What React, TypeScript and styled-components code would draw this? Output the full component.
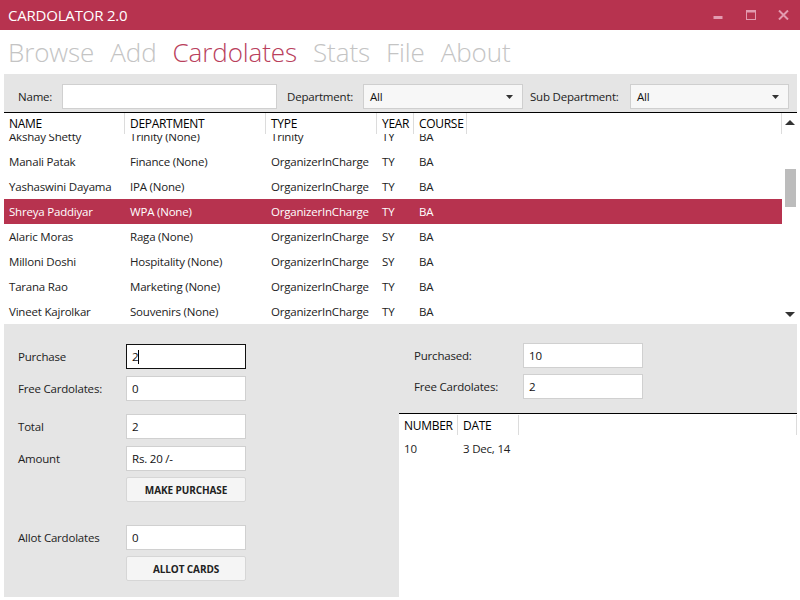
import React from "react";
import styled, { createGlobalStyle } from "styled-components";

const CRIMSON = "#b7334f";
const PANEL = "#e5e5e5";
const FONT = `"Segoe UI", "Open Sans", "Noto Sans", sans-serif`;

const GlobalStyle = createGlobalStyle`
  html, body { margin: 0; padding: 0; background: #fff; }
  body { font-family: ${FONT}; color: #222; }
  * { box-sizing: border-box; }
`;

const Window = styled.div`
  width: 800px;
  height: 600px;
  background: #fff;
  display: flex;
  flex-direction: column;
  overflow: hidden;
  font-size: 11.5px;
  letter-spacing: -0.2px;
`;

const TitleBar = styled.div`
  height: 30px;
  flex: none;
  background: ${CRIMSON};
  display: flex;
  align-items: center;
  padding-left: 8px;
`;

const Title = styled.div`
  color: #fff;
  font-size: 15px;
  letter-spacing: -0.2px;
  flex: 1;
`;

const Controls = styled.div`
  display: flex;
  align-items: center;
  height: 30px;
`;

const CtrlBtn = styled.div`
  width: 33px;
  height: 30px;
  display: flex;
  align-items: center;
  justify-content: center;
`;

const Nav = styled.nav`
  height: 44px;
  flex: none;
  display: flex;
  align-items: center;
  gap: 16px;
  padding-left: 8px;
`;

const NavItem = styled.div<{ $active?: boolean }>`
  font-size: 26px;
  font-weight: 300;
  letter-spacing: -0.1px;
  color: ${(p) => (p.$active ? "#b9405c" : "#c4c4c4")};
  line-height: 30px;
`;

const Content = styled.div`
  flex: 1;
  display: flex;
  flex-direction: column;
  padding: 0 3px 0 4px;
`;

const FilterBar = styled.div`
  height: 38px;
  flex: none;
  background: ${PANEL};
  display: flex;
  align-items: flex-start;
  padding: 10px 0 0 14px;
  color: #222;
`;

const FilterLabel = styled.span<{ $w: number; $ml?: number }>`
  width: ${(p) => p.$w}px;
  margin-left: ${(p) => p.$ml ?? 0}px;
  white-space: nowrap;
  line-height: 25px;
  flex: none;
`;

const TextBox = styled.div<{ $w: number }>`
  width: ${(p) => p.$w}px;
  height: 25px;
  flex: none;
  background: #fff;
  border: 1px solid #d0d0d0;
`;

const Select = styled.div<{ $w: number }>`
  width: ${(p) => p.$w}px;
  height: 25px;
  flex: none;
  background: #f7f7f7;
  border: 1px solid #cfcfcf;
  display: flex;
  align-items: center;
  justify-content: space-between;
  padding: 0 9px 0 6px;
  color: #111;
`;

const Grid = styled.div`
  height: 212px;
  flex: none;
  border-top: 1px solid #000;
  display: flex;
  background: #fff;
`;

const TableArea = styled.div`
  flex: 1;
  display: flex;
  flex-direction: column;
  min-width: 0;
`;

const HeaderRow = styled.div`
  height: 21px;
  flex: none;
  display: flex;
  position: relative;
  z-index: 1;
  background: #fff;
`;

const HeaderCell = styled.div<{ $w?: number }>`
  width: ${(p) => (p.$w ? `${p.$w}px` : "auto")};
  flex: ${(p) => (p.$w ? "none" : "1")};
  border-right: 1px solid #dcdcdc;
  font-size: 12px;
  letter-spacing: -0.3px;
  font-weight: 500;
  color: #000;
  padding-left: 5px;
  line-height: 21px;
  white-space: nowrap;
  overflow: hidden;
`;

const Body = styled.div`
  flex: 1;
  overflow: hidden;
`;

const Rows = styled.div`
  margin-top: -10px;
`;

const Row = styled.div<{ $sel?: boolean }>`
  height: 25px;
  display: flex;
  align-items: center;
  background: ${(p) => (p.$sel ? CRIMSON : "transparent")};
  color: ${(p) => (p.$sel ? "#fff" : "#222")};
`;

const Cell = styled.div<{ $w: number }>`
  width: ${(p) => p.$w}px;
  flex: none;
  padding-left: 5px;
  white-space: nowrap;
  overflow: hidden;
`;

const ScrollBar = styled.div`
  width: 15px;
  flex: none;
  display: flex;
  flex-direction: column;
  align-items: center;
  background: #fff;
`;

const ArrowUp = styled.div`
  margin-top: 7px;
  width: 0;
  height: 0;
  border-left: 5px solid transparent;
  border-right: 5px solid transparent;
  border-bottom: 5px solid #333;
`;

const Thumb = styled.div`
  margin-top: 44px;
  width: 11px;
  height: 38px;
  background: #bcbcbc;
  align-self: flex-end;
  margin-right: 1px;
`;

const Spacer = styled.div`
  flex: 1;
`;

const ArrowDown = styled.div`
  margin-bottom: 7px;
  width: 0;
  height: 0;
  border-left: 5px solid transparent;
  border-right: 5px solid transparent;
  border-top: 5px solid #333;
`;

const Bottom = styled.div`
  flex: 1;
  display: flex;
`;

const LeftForm = styled.div`
  width: 395px;
  height: 273px;
  background: ${PANEL};
  padding: 20px 0 0 14px;
  display: flex;
  flex-direction: column;
`;

const FormRow = styled.div<{ $mt?: number; $labelW?: number }>`
  display: grid;
  grid-template-columns: ${(p) => p.$labelW ?? 108}px 120px;
  align-items: center;
  margin-top: ${(p) => p.$mt ?? 0}px;
  color: #222;
  white-space: nowrap;
`;

const Field = styled.div<{ $focus?: boolean }>`
  height: 25px;
  background: #fff;
  border: 1px solid ${(p) => (p.$focus ? "#111" : "#d0d0d0")};
  display: flex;
  align-items: center;
  padding-left: 5px;
  color: #111;
`;

const Caret = styled.span`
  display: inline-block;
  width: 1px;
  height: 14px;
  background: #000;
`;

const Button = styled.div`
  height: 25px;
  background: #f5f5f5;
  border: 1px solid #d6d6d6;
  border-radius: 2px;
  display: flex;
  align-items: center;
  justify-content: center;
  font-size: 10px;
  font-weight: 700;
  color: #222;
  letter-spacing: -0.1px;
`;

const RightPanel = styled.div`
  flex: 1;
  display: flex;
  flex-direction: column;
`;

const RightForm = styled.div`
  height: 89px;
  flex: none;
  background: ${PANEL};
  padding: 19px 0 0 15px;
  display: flex;
  flex-direction: column;
`;

const List = styled.div`
  flex: 1;
  background: #fff;
  border-top: 1px solid #000;
`;

const ListHeader = styled.div`
  height: 21px;
  display: flex;
  padding-top: 1px;
`;

const ListRow = styled.div`
  height: 25px;
  display: flex;
  align-items: center;
  color: #222;
  margin-top: 1px;
`;

const people = [
  ["Akshay Shetty", "Trinity (None)", "Trinity", "TY", "BA"],
  ["Manali Patak", "Finance (None)", "OrganizerInCharge", "TY", "BA"],
  ["Yashaswini Dayama", "IPA (None)", "OrganizerInCharge", "TY", "BA"],
  ["Shreya Paddiyar", "WPA (None)", "OrganizerInCharge", "TY", "BA"],
  ["Alaric Moras", "Raga (None)", "OrganizerInCharge", "SY", "BA"],
  ["Milloni Doshi", "Hospitality (None)", "OrganizerInCharge", "SY", "BA"],
  ["Tarana Rao", "Marketing (None)", "OrganizerInCharge", "TY", "BA"],
  ["Vineet Kajrolkar", "Souvenirs (None)", "OrganizerInCharge", "TY", "BA"],
];

const cols = [121, 141, 111, 37, 53];

const SelectArrow = () => (
  <svg width="7" height="4" viewBox="0 0 7 4">
    <path d="M0 0 H7 L3.5 4 Z" fill="#333" />
  </svg>
);

export default function App() {
  return (
    <>
      <GlobalStyle />
      <Window>
        <TitleBar>
          <Title>CARDOLATOR 2.0</Title>
          <Controls>
            <CtrlBtn>
              <svg width="10" height="10" viewBox="0 0 10 10">
                <rect x="0.5" y="6" width="9" height="3" fill="#e39bb0" />
              </svg>
            </CtrlBtn>
            <CtrlBtn>
              <svg width="10" height="10" viewBox="0 0 10 10">
                <rect x="0.5" y="0.5" width="9" height="9" fill="none" stroke="#e39bb0" strokeWidth="1" />
                <rect x="0" y="0" width="10" height="2.5" fill="#e39bb0" />
              </svg>
            </CtrlBtn>
            <CtrlBtn>
              <svg width="11" height="10" viewBox="0 0 11 10">
                <path d="M1 0.5 L10 9.5 M10 0.5 L1 9.5" stroke="#e39bb0" strokeWidth="2" />
              </svg>
            </CtrlBtn>
          </Controls>
        </TitleBar>
        <Nav>
          <NavItem>Browse</NavItem>
          <NavItem>Add</NavItem>
          <NavItem $active>Cardolates</NavItem>
          <NavItem>Stats</NavItem>
          <NavItem>File</NavItem>
          <NavItem>About</NavItem>
        </Nav>
        <Content>
          <FilterBar>
            <FilterLabel $w={44}>Name:</FilterLabel>
            <TextBox $w={215} />
            <FilterLabel $w={76} $ml={10}>Department:</FilterLabel>
            <Select $w={160}>
              <span>All</span>
              <SelectArrow />
            </Select>
            <FilterLabel $w={100} $ml={7}>Sub Department:</FilterLabel>
            <Select $w={159}>
              <span>All</span>
              <SelectArrow />
            </Select>
          </FilterBar>
          <Grid>
            <TableArea>
              <HeaderRow>
                <HeaderCell $w={121}>NAME</HeaderCell>
                <HeaderCell $w={141}>DEPARTMENT</HeaderCell>
                <HeaderCell $w={111}>TYPE</HeaderCell>
                <HeaderCell $w={37}>YEAR</HeaderCell>
                <HeaderCell $w={53}>COURSE</HeaderCell>
                <HeaderCell />
              </HeaderRow>
              <Body>
                <Rows>
                  {people.map((p, i) => (
                    <Row key={p[0]} $sel={i === 3}>
                      {p.map((v, j) => (
                        <Cell key={j} $w={cols[j]}>
                          {v}
                        </Cell>
                      ))}
                    </Row>
                  ))}
                </Rows>
              </Body>
            </TableArea>
            <ScrollBar>
              <ArrowUp />
              <Thumb />
              <Spacer />
              <ArrowDown />
            </ScrollBar>
          </Grid>
          <Bottom>
            <LeftForm>
              <FormRow>
                <span>Purchase</span>
                <Field $focus>
                  2<Caret />
                </Field>
              </FormRow>
              <FormRow $mt={7}>
                <span>Free Cardolates:</span>
                <Field>0</Field>
              </FormRow>
              <FormRow $mt={13}>
                <span>Total</span>
                <Field>2</Field>
              </FormRow>
              <FormRow $mt={7}>
                <span>Amount</span>
                <Field>Rs. 20 /-</Field>
              </FormRow>
              <FormRow $mt={6}>
                <span />
                <Button>MAKE PURCHASE</Button>
              </FormRow>
              <FormRow $mt={23}>
                <span>Allot Cardolates</span>
                <Field>0</Field>
              </FormRow>
              <FormRow $mt={6}>
                <span />
                <Button>ALLOT CARDS</Button>
              </FormRow>
            </LeftForm>
            <RightPanel>
              <RightForm>
                <FormRow $labelW={109}>
                  <span>Purchased:</span>
                  <Field>10</Field>
                </FormRow>
                <FormRow $labelW={109} $mt={6}>
                  <span>Free Cardolates:</span>
                  <Field>2</Field>
                </FormRow>
              </RightForm>
              <List>
                <ListHeader>
                  <HeaderCell $w={59}>NUMBER</HeaderCell>
                  <HeaderCell $w={61}>DATE</HeaderCell>
                  <HeaderCell />
                </ListHeader>
                <ListRow>
                  <Cell $w={59}>10</Cell>
                  <Cell $w={61}>3 Dec, 14</Cell>
                </ListRow>
              </List>
            </RightPanel>
          </Bottom>
        </Content>
      </Window>
    </>
  );
}
